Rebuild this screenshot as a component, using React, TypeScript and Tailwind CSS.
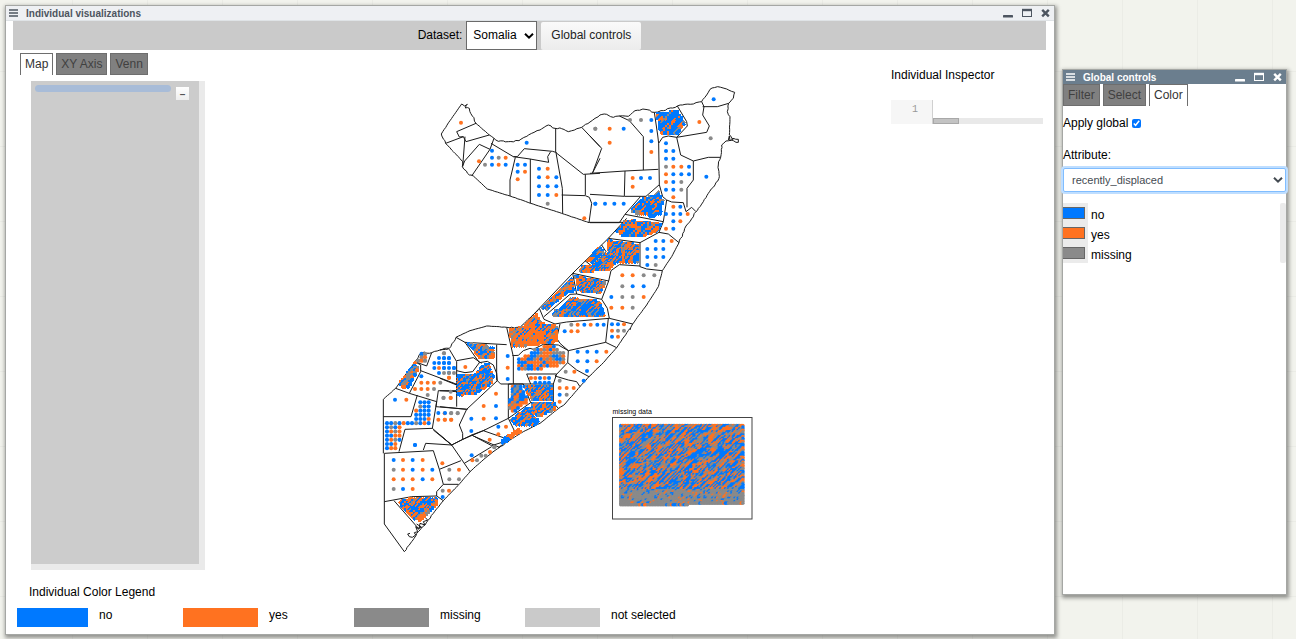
import React from "react";

const COLORS: Record<string, string> = { b: "#0079ff", o: "#ff7220", g: "#8a8a8a" };

/* ---------- map data: each sheet is drawn at three times its size from its origin ---------- */

type Cluster = { area: string; step: number; r: number; mix: [number, number] };
type Sheet = { x: number; y: number; coast: string; borders: string; dots: string; clusters: Cluster[] };

const SHEETS: Sheet[] = [
  {
    x: 430,
    y: 80,
    coast:
      "34,162 60,122 95,72 104,78 112,73 106,84 118,85 122,100 138,130 178,165 192,175 205,184 235,185 267,182 305,160 330,150 355,135 375,145 395,146 415,155 455,142 480,126 495,115 510,105|477,428 395,400 302,370 240,348 172,327 130,288 118,285 97,260 98,245 85,230 70,215 47,190 34,162",
    borders:
      "M47 190L100 170L88 171L80 155L138 130M100 170L108 185L178 165M105 170L98 260M192 175L180 208L125 288M98 258L104 243L148 193L180 208M183 190L250 230L262 230L283 206L368 214L380 218M250 230L300 237L356 247L353 230L362 215M256 232L240 300V348M301 237V370M377 145V216M378 218L397 325L398 400M378 218L460 283L510 280M455 142L510 200M510 235L487 280M466 283V345M395 345L466 347L478 352L485 370L477 428",
    dots: "o93,128 b290,188 b186,212 b186,233 g206,233 o227,233 g165,254 b186,254 o206,254 b227,254 o147,244 b263,254 b285,254 b263,275 o285,275 o263,298 b327,266 o353,266 b327,292 o353,292 b379,292 b327,319 b353,319 b379,319 b327,345 b353,345 o379,345 g353,371 o463,415 g496,146 b496,371",
    clusters: [],
  },
  {
    x: 590,
    y: 80,
    coast:
      "30,105 50,103 70,112 88,108 115,109 135,92 165,88 193,97 220,92 262,78 285,73 310,72 335,65 350,45 360,28 383,20 410,27 434,37 430,55 416,70 412,95 420,110 418,165 425,175 445,178 445,187 438,187 425,180 408,183 395,195 392,232 385,255 388,290 375,315 355,340 340,365 325,385 318,395 300,425 288,438",
    borders:
      "M0 168L35 205L8 278M0 280L105 273L205 268M88 108L118 122L160 170V270M105 273L103 348M0 343L103 349L152 349M152 349H168L208 314L218 350L230 360L245 366L280 368L288 395L305 382L318 395M193 97L203 165L206 190L208 314M206 190L218 172L235 168L260 172L292 138L290 125L262 78M260 172L350 157L358 138L338 105L342 80L335 65M338 80L382 80L416 70M260 172L272 225L310 243L355 232L392 232M310 243V300L291 325V382M152 349L105 403L220 425L230 360M0 428H88L105 403M415 180L418 168L420 182L430 178",
    dots: "b371,58 o328,126 g362,175 b349,290 g16,146 o59,146 b101,146 o59,188 g120,120 g153,120 b184,120 b184,153 b184,184 o184,216 b228,190 b228,213 b250,213 b228,236 b250,236 g228,260 o250,260 o274,260 b297,260 o228,283 b250,283 b274,283 b297,283 o228,306 b250,306 g274,306 b228,329 b250,329 g274,329 o250,352 o128,294 b153,294 b180,294 o128,320 b16,371 b45,371 b73,371 b101,371 o250,380 b271,380 b228,402 b250,402 b271,402 o293,402 b250,424 o271,424 o228,446 b250,446",
    clusters: [
      { area: "202,98 262,93 284,130 262,163 215,163 206,140", step: 6.4, r: 6, mix: [0.64, 0.88] },
      { area: "190,345 208,335 213,352 220,362 212,402 190,410 120,398 150,360", step: 6.4, r: 6, mix: [0.66, 0.88] },
      { area: "98,432 125,420 215,433 200,455 80,455", step: 6.4, r: 6, mix: [0.55, 0.9] },
    ],
  },
  {
    x: 530,
    y: 190,
    coast: "468,108 462,125 447,158 425,200 397,242 385,290 350,345 308,402 300,420",
    borders:
      "M290 85L235 145L128 250L28 355L0 385M282 97H176M400 95L387 127L330 158L235 145M387 127L415 132L447 158M330 158V230L350 237L397 242M330 228L268 224L243 242L236 273L128 250M236 273L215 328L140 312L128 250M215 328L232 355L238 385M28 355L42 388L75 402L110 396L238 385L308 402M140 312L120 313L42 380M165 212L185 228L228 185L215 165",
    dots: "b377,153 b400,153 o425,153 b352,177 b377,177 b400,177 b352,201 b377,201 b400,201 b352,225 g377,225 o277,256 o308,256 g341,256 g373,256 g277,289 b308,289 b341,289 b244,321 g277,321 g308,321 o341,321 o244,353 o277,353 g308,353",
    clusters: [
      { area: "285,92 385,100 380,127 330,140 265,135", step: 6, r: 5.6, mix: [0.5, 0.86] },
      { area: "232,150 325,163 325,218 260,218 235,243 150,245 155,230 190,225 235,185", step: 4.6, r: 4.6, mix: [0.48, 0.74] },
      { area: "208,168 224,185 188,220 173,212", step: 6, r: 5.6, mix: [0.55, 0.85] },
      { area: "135,256 228,275 212,310 145,303", step: 4.6, r: 4.6, mix: [0.5, 0.75] },
      { area: "125,265 135,303 113,308 50,360 35,355", step: 4.6, r: 4.6, mix: [0.5, 0.8] },
      { area: "120,325 210,333 225,377 70,380", step: 5, r: 5, mix: [0.52, 0.82] },
    ],
  },
  {
    x: 440,
    y: 310,
    coast:
      "570,55 530,113 490,158 447,200 420,230 375,282 350,300 300,340 250,365 210,390 175,415|0,120 28,115 48,82 90,62 140,48 200,52 240,52 295,0",
    borders:
      "M48 82L75 97L200 104M200 52L220 140V222M75 97L118 158M170 104V210M505 25L497 97L530 113M497 97L385 122L360 100L350 85L360 42M217 137L235 136L250 122L270 115L280 118L310 103L355 105L385 122L383 158L410 180L447 200M383 158L345 198L385 210L410 215L420 230M260 192H350L340 222H205M260 192L272 222M170 210L182 222H205L205 325L272 278H340L355 295M205 222H250L272 278M340 222V278M28 118L50 155V290M50 152L100 143L125 160M50 182L75 188L98 185L118 158L142 154L160 165L170 190L172 212L80 298L58 345L68 370V388M0 205L50 225M0 242H50M0 290L80 298M0 375L35 405L68 388L130 362L205 325M100 378L178 412M130 362L190 383M205 325L222 360",
    dots: "b203,138 o203,173 b203,207 o76,171 o168,251 b168,288 o131,288 o131,326 b168,325 b94,326 b94,363 g12,130 b12,145 b27,145 b12,159 b27,159 b12,174 b27,188 b42,174 o27,203 g10,264 o32,264 o14,310 g33,310 g53,310 o14,329 o33,329 b175,350 o198,350 o175,373 o149,389 g163,411 g394,44 o413,44 b433,44 o452,44 b472,44 b491,44 b374,64 o394,64 o413,64 b516,43 b534,43 o552,43 o516,62 g534,62 g552,62 b516,80 o534,80 b413,125 b442,125 b470,125 o499,125 b413,154 b442,154 o470,154 g377,185 o403,185 b441,183 b431,212 g359,212 o359,234 o380,234 o401,234 b359,254 g380,254 o359,275 o273,204 o286,204 b300,204 o314,204 b327,204 b286,218 b300,218 b314,218 b327,218",
    clusters: [
      { area: "290,12 302,40 352,48 350,95 215,113 210,58 250,50", step: 5.5, r: 5.4, mix: [0.2, 0.34] },
      { area: "345,0 490,0 492,14 340,18", step: 5, r: 5, mix: [0.6, 0.9] },
      { area: "85,100 165,112 165,142 120,146", step: 6.5, r: 6, mix: [0.42, 0.8] },
      { area: "285,112 340,108 378,130 370,160 340,172 235,185 235,145 270,130", step: 9.5, r: 6, mix: [0.28, 0.48] },
      { area: "125,166 145,162 162,200 155,220 110,250 52,258 53,195 105,195", step: 4.8, r: 4.8, mix: [0.6, 0.82] },
      { area: "215,228 245,228 265,275 212,312 208,280", step: 8, r: 6, mix: [0.45, 0.7] },
      { area: "252,228 336,228 336,272 276,272", step: 4.8, r: 4.8, mix: [0.4, 0.68] },
      { area: "276,280 345,282 350,297 300,318 278,312", step: 5.5, r: 5.3, mix: [0.3, 0.55] },
      { area: "268,288 276,318 302,332 285,345 230,350 212,330", step: 5, r: 5, mix: [0.65, 0.83] },
      { area: "235,358 245,363 212,384 200,380", step: 5.5, r: 6, mix: [0.02, 0.1] },
      { area: "200,380 212,384 205,390 188,402 180,396", step: 5.5, r: 6, mix: [0.95, 0.97] },
    ],
  },
  {
    x: 375,
    y: 340,
    coast: "25,178 62,145 120,65 140,38 170,38 195,30 221,27",
    borders:
      "M25 340V178M120 65L155 78L170 38M137 75V95L103 160M137 92L243 132M62 145L103 160L185 185L172 265L230 315M127 165L108 230H25M245 155L190 152L183 200L278 208M72 335L90 268L172 265M120 65L137 75",
    dots: "b60,179 o94,179 g227,155 b139,109 o139,128 o158,128 o177,128 g196,128 o120,147 o139,147 o158,147 g177,147 g158,165 g206,173 o227,173 b190,219 b210,219 g229,219 g248,219 o190,239 o210,239 o229,239 b120,315 b192,54 b207,54 b222,54 b178,69 b192,69 b207,69 b222,69 b237,84 b207,84 b222,84 b178,84 o192,84 b192,99 g207,99 g222,99 g237,99 o222,113 g207,40",
    clusters: [
      { area: "135,40 160,42 155,66 128,62", step: 10, r: 6.5, mix: [0.35, 0.6] },
      { area: "120,68 130,85 125,100 100,145 68,138", step: 7, r: 6.5, mix: [0.5, 0.8] },
      { area: "130,185 168,185 165,256 82,256 75,305 68,328 34,328 34,244 118,244 120,212 135,205", step: 12.5, r: 6.2, mix: [0.6, 0.85] },
    ],
  },
  {
    x: 375,
    y: 430,
    coast: "385,42 330,85 285,125 255,160 205,212 175,250 150,285 130,305 110,335 88,365",
    borders:
      "M88 365L28 282V70L175 62L193 118L205 163H250M145 60L152 40L230 45L285 125M175 0L230 45L290 15L330 0M193 118L258 92M290 15L350 47L378 38M268 100L350 50M205 163L185 185V198L205 212M28 215L110 200L185 198M57 212L130 295M150 262L158 270L145 275L150 285L135 280L132 298L122 290L128 305L118 308L122 315L112 322L103 320L98 312L105 310M125 282L140 292L128 295",
    dots: "b56,90 o84,90 b113,90 o143,90 g56,119 o84,119 b113,119 o143,119 b172,119 o56,148 o84,148 o113,148 b143,148 o172,148 g56,177 b84,177 o113,177 o202,100 g223,119 o252,119 g223,148 g252,148 g203,182 o222,182 b203,201 b290,76 o292,91 g306,91 g319,77 g332,77 o345,66 g358,52 b120,45",
    clusters: [
      { area: "68,215 110,205 185,205 188,215 135,272 118,270", step: 5.4, r: 5.2, mix: [0.52, 0.68] },
      { area: "178,222 188,220 140,272 135,262", step: 6, r: 6, mix: [0.1, 0.15] },
    ],
  },
];

function makeRandom(seed: number) {
  let s = seed;
  return () => {
    s = (s * 1664525 + 1013904223) % 4294967296;
    return s / 4294967296;
  };
}

const parsePoints = (text: string) => text.split(" ").map((p) => p.split(",").map(Number));

/* Short stretches of coast are ragged, long ones run straight. */
function coastPath(text: string) {
  const rand = makeRandom(11);
  return text
    .split("|")
    .map((line) => {
      const pts = parsePoints(line);
      let d = `M${pts[0][0]} ${pts[0][1]}`;
      for (let i = 1; i < pts.length; i++) {
        const [ax, ay] = pts[i - 1];
        const [bx, by] = pts[i];
        const length = Math.hypot(bx - ax, by - ay);
        const n = Math.max(1, Math.round(length / 8));
        const spread = length > 46 ? 1 : 4;
        for (let k = 1; k < n; k++) {
          const t = k / n;
          d += `L${(ax + (bx - ax) * t + (rand() - 0.5) * spread).toFixed(1)} ${(ay + (by - ay) * t + (rand() - 0.5) * spread).toFixed(1)}`;
        }
        d += `L${bx} ${by}`;
      }
      return d;
    })
    .join("");
}

function inside(x: number, y: number, poly: number[][]) {
  let hit = false;
  for (let i = 0, j = poly.length - 1; i < poly.length; j = i++) {
    const [xi, yi] = poly[i];
    const [xj, yj] = poly[j];
    if (yi > y !== yj > y && x < ((xj - xi) * (y - yi)) / (yj - yi) + xi) hit = !hit;
  }
  return hit;
}

function ClusterDots({ cluster, seed }: { cluster: Cluster; seed: number }) {
  const rand = makeRandom(seed);
  const poly = parsePoints(cluster.area);
  const xs = poly.map((p) => p[0]);
  const ys = poly.map((p) => p[1]);
  const dots: React.ReactElement[] = [];
  let above: string[] = [];
  for (let y = Math.min(...ys) + 2; y <= Math.max(...ys); y += cluster.step) {
    const row: string[] = [];
    let i = 0;
    for (let x = Math.min(...xs) + 2; x <= Math.max(...xs); x += cluster.step) {
      const v = rand();
      let c = v < cluster.mix[0] ? "b" : v < cluster.mix[1] ? "g" : "o";
      if (c === "g" && cluster.mix[1] > 0.6 && rand() < 0.4) c = "o";
      if (rand() < 0.4 && above[i + 1]) c = above[i + 1];
      row.push(c);
      i++;
      if (inside(x, y, poly)) {
        dots.push(<circle key={dots.length} cx={x} cy={y} r={cluster.r} fill={COLORS[c]} />);
      }
    }
    above = row;
  }
  return <g shapeRendering={cluster.step < 8 ? "crispEdges" : "auto"}>{dots}</g>;
}

function MissingBlock() {
  const rand = makeRandom(77);
  const dots: React.ReactElement[] = [];
  const cols = 78;
  let above: string[] = [];
  for (let row = 0; row < 51; row++) {
    const low = row > 40;
    const line: string[] = [];
    for (let i = 0; i < cols; i++) {
      if (row === 50 && i > 42) break;
      const v = rand();
      let c = low ? (v < 0.12 ? "b" : v < 0.19 ? "o" : "g") : v < 0.43 ? "b" : v < 0.74 ? "o" : "g";
      if (!low && rand() < 0.45 && above[i + 1]) c = above[i + 1];
      line.push(c);
      dots.push(<circle key={dots.length} cx={620.8 + i * 1.585} cy={425.5 + row * 1.585} r={1.8} fill={COLORS[c]} />);
    }
    above = line;
  }
  return <g>{dots}</g>;
}

function SomaliaMap() {
  return (
    <svg viewBox="375 80 385 480" className="block h-[480px] w-[385px] shrink-0" role="img" aria-label="Map of Somalia">
      {SHEETS.map((s, i) => (
        <g key={i} transform={`translate(${s.x} ${s.y}) scale(0.33333)`}>
          <path d={s.borders} fill="none" stroke="#1a1a1a" strokeWidth="3" strokeLinejoin="round" />
          <path d={coastPath(s.coast)} fill="none" stroke="#1a1a1a" strokeWidth="3" strokeLinejoin="round" />
        </g>
      ))}
      {SHEETS.map((s, i) => (
        <g key={i} transform={`translate(${s.x} ${s.y}) scale(0.33333)`}>
          {s.clusters.map((c, k) => (
            <ClusterDots key={k} cluster={c} seed={i * 31 + k * 7 + 5} />
          ))}
          {s.dots.split(" ").map((d, k) => {
            const [x, y] = d.slice(1).split(",").map(Number);
            return <circle key={k} cx={x} cy={y} r="6" fill={COLORS[d[0]]} />;
          })}
        </g>
      ))}
      <text x="612.5" y="414" fontSize="7" fill="#000">
        missing data
      </text>
      <rect x="612.5" y="417.5" width="139.5" height="101.5" fill="#fff" stroke="#444" />
      <MissingBlock />
    </svg>
  );
}

/* ---------- window chrome ---------- */

function WindowBar({ title, active }: { title: string; active?: boolean }) {
  return (
    <header
      className={
        active
          ? "flex h-[14px] items-center bg-[#6b7e8e] pl-[3px] pr-1 text-white"
          : "flex h-[15px] items-center border-b border-[#dfe3e6] bg-[#eef0f3] pl-[3px] pr-1 text-[#4d5560]"
      }
    >
      <button aria-label="Window menu" className="mr-2 flex">
        <svg width="9" height="8" viewBox="0 0 9 8" fill="none" stroke="currentColor" strokeWidth="1.3">
          <path d="M0 1H9M0 4H9M0 7H9" />
        </svg>
      </button>
      <h1 className="flex-1 pt-px text-[10px] leading-[14px] font-bold">{title}</h1>
      <div className="flex items-center gap-[9px]">
        <button aria-label="Minimize" className="flex">
          <svg width="10" height="10" viewBox="0 0 10 10">
            <rect x="0" y="7" width="10" height="2.6" rx=".6" fill="currentColor" />
          </svg>
        </button>
        <button aria-label="Maximize" className="flex">
          <svg width="10" height="10" viewBox="0 0 10 10" fill="none" stroke="currentColor">
            <rect x=".5" y="1.5" width="9" height="7" />
            <path d="M0 2H10" strokeWidth="2.4" />
          </svg>
        </button>
        <button aria-label="Close" className="flex">
          <svg width="9" height="10" viewBox="0 0 9 10" fill="none" stroke="currentColor" strokeWidth="2.4">
            <path d="M1.2 1.9L7.8 8.3M7.8 1.9L1.2 8.3" />
          </svg>
        </button>
      </div>
    </header>
  );
}

function Tabs({ items, selected }: { items: string[]; selected: string }) {
  return (
    <div role="tablist" className="flex gap-[3px]">
      {items.map((t) => (
        <button
          key={t}
          role="tab"
          aria-selected={t === selected}
          className={
            t === selected
              ? "h-[22px] border border-b-0 border-[#6e6e6e] bg-white px-1 pb-px text-[#333]"
              : "h-[22px] border border-[#6e6e6e] bg-[#808080] px-1 text-[#404040]"
          }
        >
          {t}
        </button>
      ))}
    </div>
  );
}

function Chevron() {
  return (
    <svg
      width="10"
      height="7"
      viewBox="0 0 10 7"
      fill="none"
      stroke="currentColor"
      strokeWidth="2"
      className="pointer-events-none absolute top-1/2 right-[3px] -translate-y-1/2"
    >
      <path d="M1 1.2L5 5.2L9 1.2" />
    </svg>
  );
}

function LegendItem({ swatch, label, cell }: { swatch: string; label: string; cell: string }) {
  return (
    <li className={`flex gap-[11px] ${cell}`}>
      <span className={`h-[19px] ${swatch}`} />
      <span className="leading-[14px]">{label}</span>
    </li>
  );
}

function IndividualWindow() {
  return (
    <section className="flex min-w-0 flex-1 flex-col self-stretch border border-[#a5a7a4] bg-white shadow-[1px_2px_4px_1px_rgba(0,0,0,0.4)]">
      <WindowBar title="Individual visualizations" />
      <div className="mr-2 ml-[7px] flex h-[29px] items-center justify-center gap-1 bg-[#cacaca]">
        <label htmlFor="dataset" className="pb-px">
          Dataset:
        </label>
        <div className="relative">
          <select id="dataset" className="block h-[29px] w-[71px] appearance-none border border-[#6a6a6a] bg-white pb-px pl-[6px]">
            <option>Somalia</option>
          </select>
          <Chevron />
        </div>
        <button className="h-[28px] rounded-xs bg-linear-to-b from-[#fafafa] to-[#ececec] px-[10px] pb-px text-[#222]">
          Global controls
        </button>
      </div>
      <div className="mt-[3px] ml-[14px]">
        <Tabs items={["Map", "XY Axis", "Venn"]} selected="Map" />
      </div>
      <div className="flex pl-[25px]">
        <aside className="mt-[6px] h-[489px] w-[174px] shrink-0 bg-[#eaeaea]">
          <div className="flex h-[483px] w-[168px] items-start justify-between bg-[#cccccc] pt-1 pr-[10px] pl-1">
            <div className="h-[7px] w-[136px] rounded-full bg-[#a8bcd8]" />
            <button
              aria-label="Collapse"
              className="mt-[2px] flex h-[13px] w-[13px] items-end justify-center bg-linear-to-b from-white to-[#eeeeee] text-[10px] leading-[10px] font-bold text-[#555]"
            >
              –
            </button>
          </div>
        </aside>
        <div className="flex min-w-0 flex-1 justify-center pt-[5px] pl-[38px]">
          <SomaliaMap />
        </div>
        <aside className="-mt-2 w-[163px] shrink-0 pr-[11px]">
          <h2>Individual Inspector</h2>
          <div className="mt-[17px] flex h-6">
            <div className="w-[42px] border-r border-[#d0d0d0] bg-[#f6f6f6] pr-[14px] text-right font-['Liberation_Mono',monospace] text-[10px] leading-5 text-[#999]">
              1
            </div>
            <div className="flex flex-1 items-end">
              <div className="h-[6px] w-full bg-[#e9e9e9]">
                <div className="h-full w-[26px] border border-[#a8a8a8] bg-[#c3c3c3]" />
              </div>
            </div>
          </div>
        </aside>
      </div>
      <h2 className="mt-[14px] ml-[23px]">Individual Color Legend</h2>
      <ul className="mt-[8px] ml-[11px] flex">
        <LegendItem swatch="w-[71px] bg-[#0079ff]" label="no" cell="w-[166px]" />
        <LegendItem swatch="w-[75px] bg-[#ff7220]" label="yes" cell="w-[171px]" />
        <LegendItem swatch="w-[75px] bg-[#8a8a8a]" label="missing" cell="w-[171px]" />
        <LegendItem swatch="w-[75px] bg-[#cacaca]" label="not selected" cell="w-[171px]" />
      </ul>
    </section>
  );
}

function ControlsWindow() {
  return (
    <section className="mt-16 mr-1 h-[526px] w-[225px] shrink-0 border border-[#a5a7a4] bg-white shadow-[1px_2px_4px_1px_rgba(0,0,0,0.4)]">
      <WindowBar title="Global controls" active />
      <Tabs items={["Filter", "Select", "Color"]} selected="Color" />
      <div className="mt-[9px] flex items-center gap-1">
        <label htmlFor="apply">Apply global</label>
        <input id="apply" type="checkbox" defaultChecked className="h-[9px] w-[9px] accent-[#0075ff]" />
      </div>
      <label htmlFor="attribute" className="mt-4 block">
        Attribute:
      </label>
      <div className="relative mt-[5px] text-[#444b52]">
        <select
          id="attribute"
          className="block h-[24px] w-full appearance-none rounded-xs border border-[#80bdff] bg-white pb-px pl-2 text-[11px] shadow-[0_0_0_2px_#bfdeff]"
        >
          <option>recently_displaced</option>
        </select>
        <Chevron />
      </div>
      <div className="mt-[11px] flex justify-between">
        <ul className="flex-1">
          {[
            ["no", "bg-[#0079ff]"],
            ["yes", "bg-[#ff7220]"],
            ["missing", "bg-[#8a8a8a]"],
          ].map(([label, bg]) => (
            <li key={label} className="flex h-5 gap-[3px]">
              <span className="w-[25px] bg-[#ebebeb] pt-1">
                <span className={`block h-3 w-[22px] border border-l-0 border-[#666] ${bg}`} />
              </span>
              <span className="pt-1">{label}</span>
            </li>
          ))}
        </ul>
        <div className="w-[6px] rounded-xs bg-[#ebebeb]" />
      </div>
    </section>
  );
}

export default function App() {
  return (
    <main className="flex min-h-screen items-start gap-[7px] bg-[#f2f3ed] bg-[linear-gradient(to_right,#ebece6_1px,transparent_1px),linear-gradient(to_bottom,#ebece6_1px,transparent_1px)] bg-size-[75px_75px] bg-position-[72px_71px] p-[5px] pb-1 font-['Liberation_Sans',Arial,sans-serif] text-[12px] leading-4 text-black">
      <IndividualWindow />
      <ControlsWindow />
    </main>
  );
}
